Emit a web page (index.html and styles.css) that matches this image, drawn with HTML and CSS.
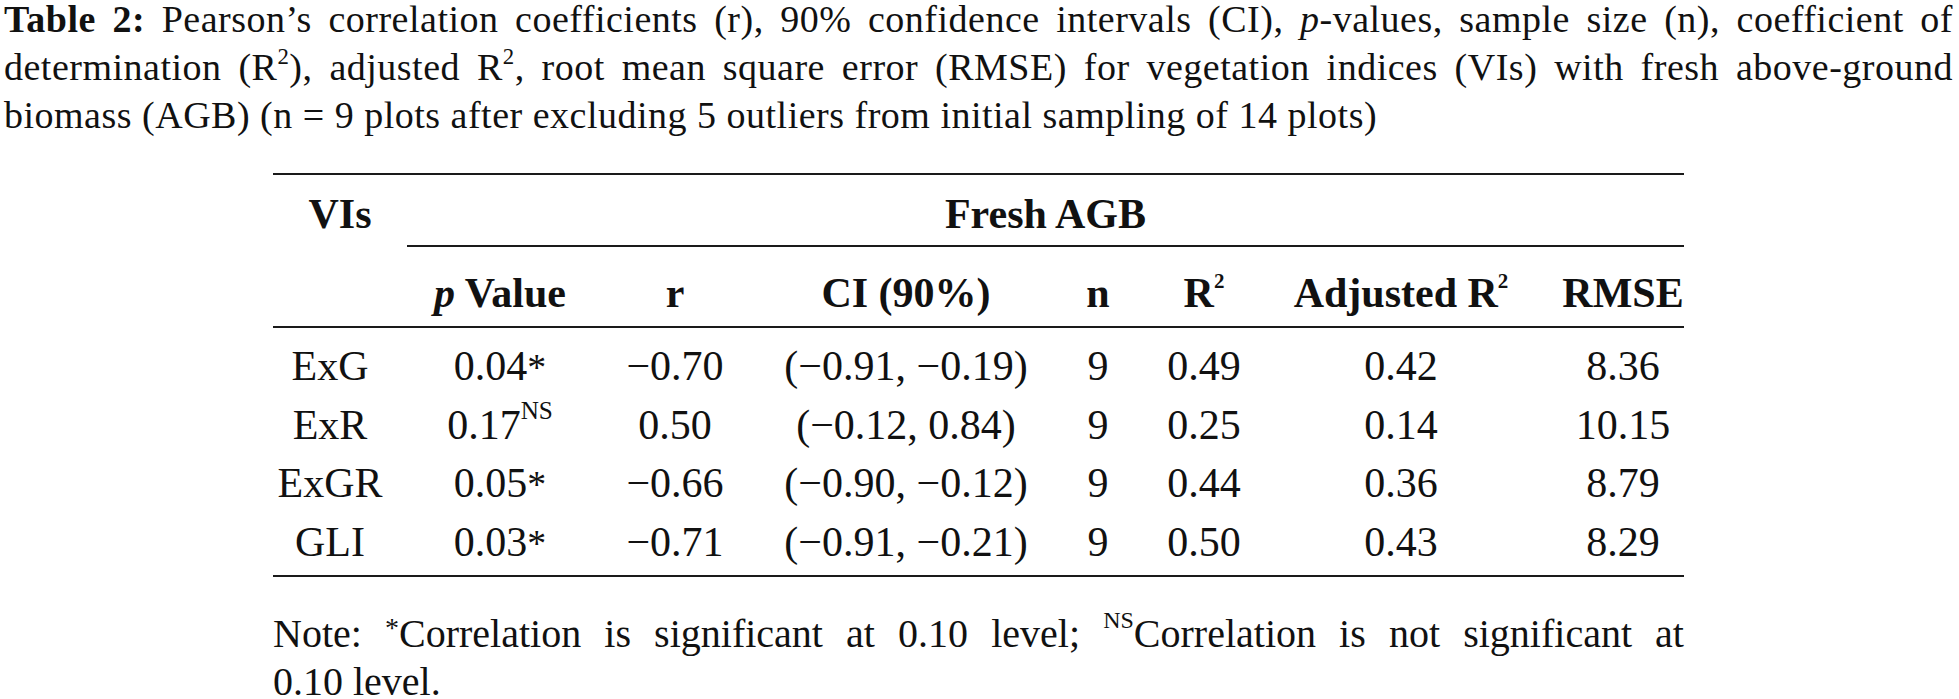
FILE: index.html
```html
<!DOCTYPE html>
<html lang="en">
<head>
<meta charset="utf-8">
<title>Table 2</title>
<link rel="stylesheet" href="styles.css">
</head>
<body>
<div class="caption">
  <span class="cline just"><b>Table 2:</b> Pearson’s correlation coefficients (r), 90% confidence intervals (CI), <i>p</i>-values, sample size (n), coefficient of</span>
  <span class="cline just">determination (R<sup class="csup">2</sup>), adjusted R<sup class="csup">2</sup>, root mean square error (RMSE) for vegetation indices (VIs) with fresh above-ground</span>
  <span class="cline">biomass (AGB) (n = 9 plots after excluding 5 outliers from initial sampling of 14 plots)</span>
</div>

<div class="tbl">
  <div class="hrow1">
    <div class="c-vi">VIs</div>
    <div class="group">Fresh AGB</div>
  </div>
  <div class="hrow2">
    <div class="c-vi"></div>
    <div class="cell"><i>p</i> Value</div>
    <div class="cell">r</div>
    <div class="cell">CI (90%)</div>
    <div class="cell">n</div>
    <div class="cell">R<sup class="hsup">2</sup></div>
    <div class="cell">Adjusted R<sup class="hsup">2</sup></div>
    <div class="cell c-last">RMSE</div>
  </div>
  <div class="tbody">
    <div class="row">
      <div class="c-vi">ExG</div>
      <div class="cell">0.04<span class="star">*</span></div>
      <div class="cell">−0.70</div>
      <div class="cell">(−0.91, −0.19)</div>
      <div class="cell">9</div>
      <div class="cell">0.49</div>
      <div class="cell">0.42</div>
      <div class="cell c-last">8.36</div>
    </div>
    <div class="row">
      <div class="c-vi">ExR</div>
      <div class="cell">0.17<sup class="ns">NS</sup></div>
      <div class="cell">0.50</div>
      <div class="cell">(−0.12, 0.84)</div>
      <div class="cell">9</div>
      <div class="cell">0.25</div>
      <div class="cell">0.14</div>
      <div class="cell c-last">10.15</div>
    </div>
    <div class="row">
      <div class="c-vi">ExGR</div>
      <div class="cell">0.05<span class="star">*</span></div>
      <div class="cell">−0.66</div>
      <div class="cell">(−0.90, −0.12)</div>
      <div class="cell">9</div>
      <div class="cell">0.44</div>
      <div class="cell">0.36</div>
      <div class="cell c-last">8.79</div>
    </div>
    <div class="row">
      <div class="c-vi">GLI</div>
      <div class="cell">0.03<span class="star">*</span></div>
      <div class="cell">−0.71</div>
      <div class="cell">(−0.91, −0.21)</div>
      <div class="cell">9</div>
      <div class="cell">0.50</div>
      <div class="cell">0.43</div>
      <div class="cell c-last">8.29</div>
    </div>
  </div>
</div>

<div class="note">
  <span class="nline just">Note: <sup class="nstar">*</sup>Correlation is significant at 0.10 level; <sup class="ns">NS</sup>Correlation is not significant at</span>
  <span class="nline">0.10 level.</span>
</div>
</body>
</html>
```

FILE: styles.css
```css
html, body {
  margin: 0;
  padding: 0;
  background: #ffffff;
}

body {
  font-family: "Liberation Serif", "Times New Roman", serif;
  color: #111111;
  width: 1959px;
}

sup {
  line-height: 0;
}

/* caption */
.caption {
  margin-top: -5px;
  padding: 0 6px 0 4px;
  font-size: 38px;
  line-height: 48px;
  letter-spacing: 0.5px;
}

.cline {
  display: block;
  white-space: nowrap;
  text-align: left;
}

.just {
  text-align: justify;
  text-align-last: justify;
}

.csup {
  font-size: 0.6em;
  vertical-align: 0.72em;
}

/* table */
.tbl {
  --cols: 134px 186px 164px 298px 86px 126px 268px 149px;
  width: 1411px;
  margin: 34px 0 0 273px;
  border-top: 2px solid #1a1a1a;
  border-bottom: 2px solid #1a1a1a;
  font-size: 42px;
  white-space: nowrap;
}

.hrow1,
.hrow2,
.row {
  display: grid;
  grid-template-columns: var(--cols);
}

.hrow1 {
  font-weight: bold;
  line-height: 48px;
}

.hrow1 > div {
  padding: 15px 0 7px;
}

.hrow1 .group {
  grid-column: 2 / span 7;
  text-align: center;
  border-bottom: 2px solid #1a1a1a;
}

.hrow2 {
  font-weight: bold;
  line-height: 48px;
  border-bottom: 2px solid #1a1a1a;
}

.hrow2 > div {
  padding: 22px 0 9px;
}

.tbody {
  padding: 9px 0 3px;
}

.row {
  line-height: 58px;
}

.c-vi {
  text-align: center;
  padding-right: 20px;
}

.cell {
  text-align: center;
}

.hrow2 .c-last,
.row .c-last {
  padding-left: 27px;
}

.hsup {
  font-size: 0.5em;
  vertical-align: 0.9em;
}

.star {
  font-size: 0.9em;
}

.ns {
  font-size: 0.6em;
  vertical-align: 0.78em;
}

/* note */
.note {
  width: 1411px;
  margin: 33px 0 0 273px;
  font-size: 40px;
  line-height: 48px;
}

.nline {
  display: block;
  white-space: nowrap;
}

.nstar {
  font-size: 0.7em;
  vertical-align: 0.35em;
}
```
